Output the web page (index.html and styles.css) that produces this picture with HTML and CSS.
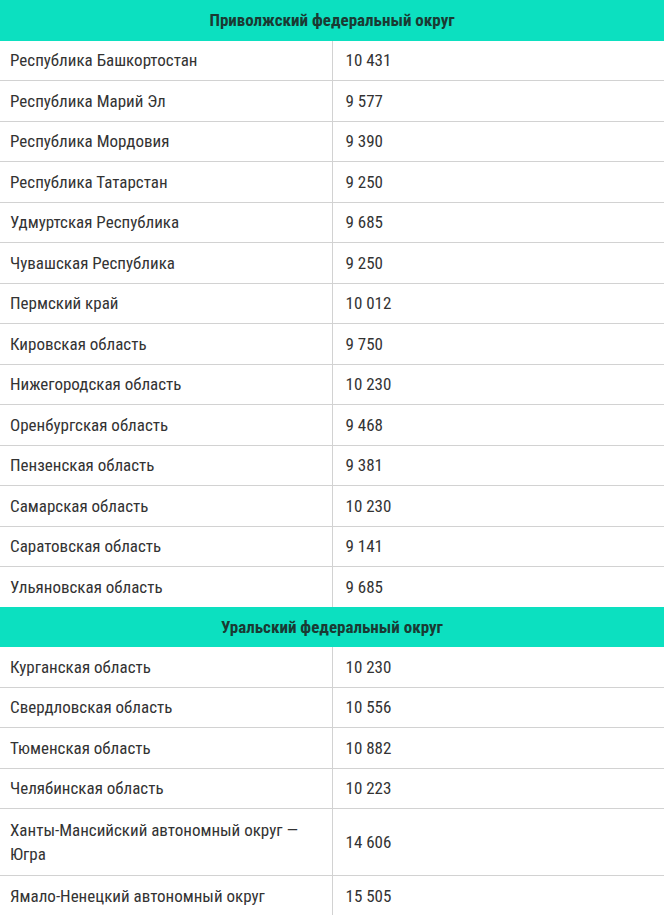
FILE: index.html
```html
<!DOCTYPE html>
<html lang="ru">
<head>
<meta charset="utf-8">
<title>Таблица</title>
<link rel="stylesheet" href="styles.css">
</head>
<body>
<table class="data">
  <tbody>
    <tr class="group"><th colspan="2">Приволжский федеральный округ</th></tr>
    <tr><td>Республика Башкортостан</td><td>10 431</td></tr>
    <tr><td>Республика Марий Эл</td><td>9 577</td></tr>
    <tr><td>Республика Мордовия</td><td>9 390</td></tr>
    <tr><td>Республика Татарстан</td><td>9 250</td></tr>
    <tr><td>Удмуртская Республика</td><td>9 685</td></tr>
    <tr><td>Чувашская Республика</td><td>9 250</td></tr>
    <tr><td>Пермский край</td><td>10 012</td></tr>
    <tr><td>Кировская область</td><td>9 750</td></tr>
    <tr><td>Нижегородская область</td><td>10 230</td></tr>
    <tr><td>Оренбургская область</td><td>9 468</td></tr>
    <tr><td>Пензенская область</td><td>9 381</td></tr>
    <tr><td>Самарская область</td><td>10 230</td></tr>
    <tr><td>Саратовская область</td><td>9 141</td></tr>
    <tr><td>Ульяновская область</td><td>9 685</td></tr>
    <tr class="group"><th colspan="2">Уральский федеральный округ</th></tr>
    <tr><td>Курганская область</td><td>10 230</td></tr>
    <tr><td>Свердловская область</td><td>10 556</td></tr>
    <tr><td>Тюменская область</td><td>10 882</td></tr>
    <tr><td>Челябинская область</td><td>10 223</td></tr>
    <tr class="tall"><td>Ханты-Мансийский автономный округ —<br>Югра</td><td>14 606</td></tr>
    <tr><td>Ямало-Ненецкий автономный округ</td><td>15 505</td></tr>
  </tbody>
</table>
</body>
</html>
```
FILE: styles.css
```css
html, body {
  margin: 0;
  padding: 0;
  background: #ffffff;
}
.data {
  width: 664px;
  border-collapse: collapse;
  table-layout: fixed;
  font-family: Roboto, "Liberation Sans", sans-serif;
  font-stretch: condensed;
  font-size: 17px;
  color: #333333;
}
.data th {
  background: #0ce0c0;
  color: #1a3a33;
  font-weight: 700;
  font-size: 17px;
  height: 40.5px;
  padding: 0;
  text-align: center;
  vertical-align: middle;
}
.data td {
  padding: 7.5px 10px;
  line-height: 24.5px;
  border-top: 1px solid #d2d2d2;
  vertical-align: middle;
}
.data tr.tall td {
  padding-top: 8.5px;
  padding-bottom: 8.5px;
}
.data tr.group + tr td {
  border-top: none;
}
.data td + td {
  border-left: 1px solid #d2d2d2;
  padding-left: 13px;
}
.data td:first-child {
  width: 312px;
}
```
